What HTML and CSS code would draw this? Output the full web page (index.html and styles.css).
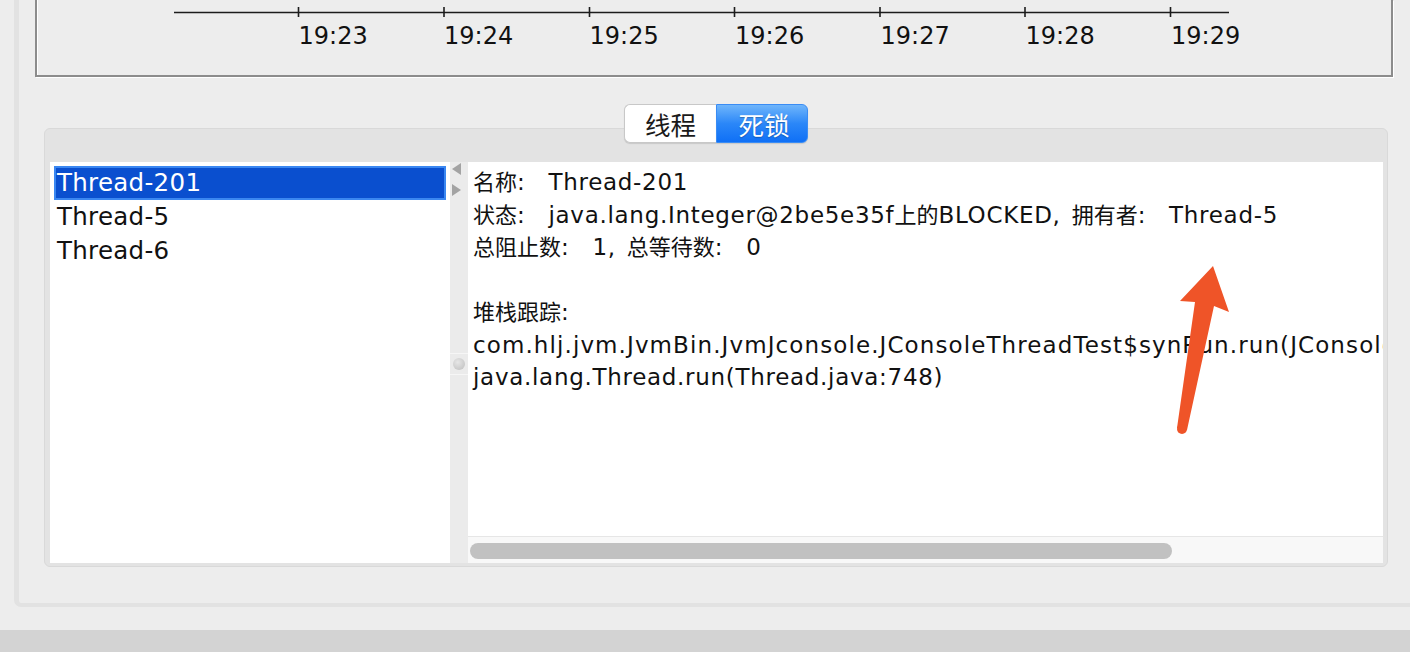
FILE: index.html
```html
<!DOCTYPE html>
<html lang="zh">
<head>
<meta charset="utf-8">
<title>JConsole 死锁</title>
<link rel="stylesheet" href="styles.css">
</head>
<body>
<div class="outer">
  <div class="chart">
    <svg class="axis" viewBox="37 0 1354 75" width="1354" height="75">
      <line x1="174" y1="12.5" x2="1229" y2="12.5" class="ax"/>
      <line x1="298.5" y1="7" x2="298.5" y2="17" class="ax"/>
      <line x1="444" y1="7" x2="444" y2="17" class="ax"/>
      <line x1="589.5" y1="7" x2="589.5" y2="17" class="ax"/>
      <line x1="734.5" y1="7" x2="734.5" y2="17" class="ax"/>
      <line x1="880" y1="7" x2="880" y2="17" class="ax"/>
      <line x1="1025" y1="7" x2="1025" y2="17" class="ax"/>
      <line x1="1170.5" y1="7" x2="1170.5" y2="17" class="ax"/>
      <text x="298.5" y="44" class="lbl">19:23</text>
      <text x="444" y="44" class="lbl">19:24</text>
      <text x="589.5" y="44" class="lbl">19:25</text>
      <text x="735" y="44" class="lbl">19:26</text>
      <text x="880.5" y="44" class="lbl">19:27</text>
      <text x="1025.5" y="44" class="lbl">19:28</text>
      <text x="1171" y="44" class="lbl">19:29</text>
    </svg>
  </div>

  <div class="tabwrap">
    <div class="tabs">
      <div class="tab">线程</div>
      <div class="tab active">死锁</div>
    </div>
    <div class="pane">
      <div class="content">
        <div class="list">
          <div class="row selected">Thread-201</div>
          <div class="row">Thread-5</div>
          <div class="row">Thread-6</div>
        </div>
        <div class="splitter">
          <svg class="arrows" width="18" height="40" viewBox="0 0 18 40">
            <polygon points="2,7 11,1 11,13" fill="#a3a3a3"/>
            <polygon points="2,22 11,28 2,34" fill="#a3a3a3"/>
          </svg>
          <div class="knobzone">
            <div class="knob"></div>
          </div>
        </div>
        <div class="detail">
          <div class="text">
            <div class="line"><span class="k">名称</span>:<span class="sp"> </span>Thread-201</div>
            <div class="line"><span class="k">状态</span>:<span class="sp"> </span>java.lang.Integer@2be5e35f<span class="k">上的</span>BLOCKED,<span class="sp2"> </span><span class="k">拥有者</span>:<span class="sp"> </span>Thread-5</div>
            <div class="line"><span class="k">总阻止数</span>:<span class="sp"> </span>1,<span class="sp2"> </span><span class="k">总等待数</span>:<span class="sp"> </span>0</div>
            <div class="line">&nbsp;</div>
            <div class="line"><span class="k">堆栈跟踪</span>:</div>
            <div class="line trace">com.hlj.jvm.JvmBin.JvmJconsole.JConsoleThreadTest$synRun.run(JConsoleThreadTest.java:30)</div>
            <div class="line">java.lang.Thread.run(Thread.java:748)</div>
          </div>
          <div class="hscroll">
            <div class="thumb"></div>
          </div>
        </div>
      </div>
    </div>
  </div>
</div>
<div class="bottombar"></div>

<svg class="annot" width="1410" height="652" viewBox="0 0 1410 652">
  <polygon points="1213,266 1229,312 1214,306 1187,430 1177,428 1195,302 1180,301" fill="#ef5428"/>
  <circle cx="1182" cy="429" r="5" fill="#ef5428"/>
</svg>
</body>
</html>
```

FILE: styles.css
```css
html, body {
  margin: 0;
  padding: 0;
}
body {
  width: 1410px;
  height: 652px;
  overflow: hidden;
  background: #ededed;
  font-family: "DejaVu Sans", "Noto Sans CJK SC", sans-serif;
  color: #111;
  position: relative;
}
.outer {
  margin-left: 14px;
  height: 603px;
  border-left: 5px solid #e2e2e2;
  border-bottom: 4px solid #e2e2e2;
  border-bottom-left-radius: 7px;
  padding-left: 16px;
}
.chart {
  box-sizing: border-box;
  width: 1358px;
  height: 77px;
  border: 2px solid #8c8c8c;
  border-top: none;
  box-shadow: inset 1px 0 0 #fff, 1px 1px 0 #fff;
  background: #ededed;
}
.axis {
  display: block;
}
.ax {
  stroke: #1c1c1c;
  stroke-width: 1.6;
}
.lbl {
  font-family: "DejaVu Sans", sans-serif;
  font-size: 24px;
  fill: #111;
}
.tabwrap {
  margin-top: 27px;
  margin-left: 9px;
  width: 1344px;
}
.tabs {
  display: flex;
  justify-content: center;
  position: relative;
  z-index: 2;
}
.tab {
  box-sizing: border-box;
  width: 92px;
  height: 39px;
  display: flex;
  align-items: center;
  justify-content: center;
  font-family: "Noto Sans CJK SC", sans-serif;
  font-size: 25.5px;
  color: #1a1a1a;
  background: #fff;
  border: 1px solid #c8c8c8;
  border-right: none;
  border-radius: 6px 0 0 6px;
  box-shadow: 0 1px 1px rgba(0,0,0,0.12);
}
.tab.active {
  color: #fff;
  background: linear-gradient(#6fb5fb, #2b87f8 50%, #0f70f6);
  border: 1px solid #3a8cf4;
  border-radius: 0 6px 6px 0;
  text-shadow: 0 1px 1px rgba(0,0,0,0.25);
  padding-left: 4px;
}
.pane {
  margin-top: -15px;
  box-sizing: border-box;
  height: 439px;
  background: #e3e3e3;
  border: 1px solid #d9d9d9;
  border-radius: 6px;
  padding: 33px 4px 3px 5px;
}
.content {
  display: flex;
  height: 401px;
}
.list {
  width: 400px;
  background: #fff;
  padding: 4px 0 0 4px;
  box-sizing: border-box;
}
.row {
  box-sizing: border-box;
  width: 392px;
  height: 34px;
  line-height: 34px;
  padding-left: 3px;
  font-size: 24.5px;
  letter-spacing: 0.3px;
  color: #111;
  white-space: nowrap;
}
.row.selected {
  background: #0a4fcf;
  color: #fff;
  border: 2px solid #3a87f1;
  line-height: 30px;
  padding-left: 1px;
}
.splitter {
  width: 18px;
  background: #ebebeb;
  display: flex;
  flex-direction: column;
}
.arrows {
  display: block;
}
.knobzone {
  margin-top: 151px;
  height: 20px;
  border-top: 1px solid #f6f6f6;
  border-bottom: 1px solid #f6f6f6;
  display: flex;
  align-items: center;
  justify-content: center;
}
.knob {
  width: 12px;
  height: 12px;
  border-radius: 50%;
  background: radial-gradient(circle at 40% 35%, #e6e6e6, #bdbdbd);
}
.detail {
  width: 915px;
  display: flex;
  flex-direction: column;
  background: #fff;
}
.text {
  flex: 1;
  overflow: hidden;
  padding: 4px 0 0 5px;
}
.line {
  height: 32.5px;
  font-size: 23px;
  line-height: 32.5px;
  letter-spacing: 0.7px;
  white-space: nowrap;
  color: #111;
}
.line.trace {
  letter-spacing: 1.1px;
}
.k {
  font-size: 22px;
  letter-spacing: 0;
  line-height: 1;
}
.sp {
  display: inline-block;
  white-space: pre;
  width: 23px;
  line-height: 1;
}
.sp2 {
  display: inline-block;
  white-space: pre;
  width: 11px;
  line-height: 1;
}
.hscroll {
  height: 27px;
  border-top: 1px solid #e6e6e6;
  background: #f8f8f8;
  padding: 6px 0 0 2px;
  box-sizing: border-box;
}
.thumb {
  width: 702px;
  height: 16px;
  border-radius: 8px;
  background: #c1c1c1;
}
.bottombar {
  position: absolute;
  left: 0;
  top: 630px;
  width: 1410px;
  height: 22px;
  background: #d3d3d3;
}
.annot {
  position: absolute;
  left: 0;
  top: 0;
  pointer-events: none;
}
```
